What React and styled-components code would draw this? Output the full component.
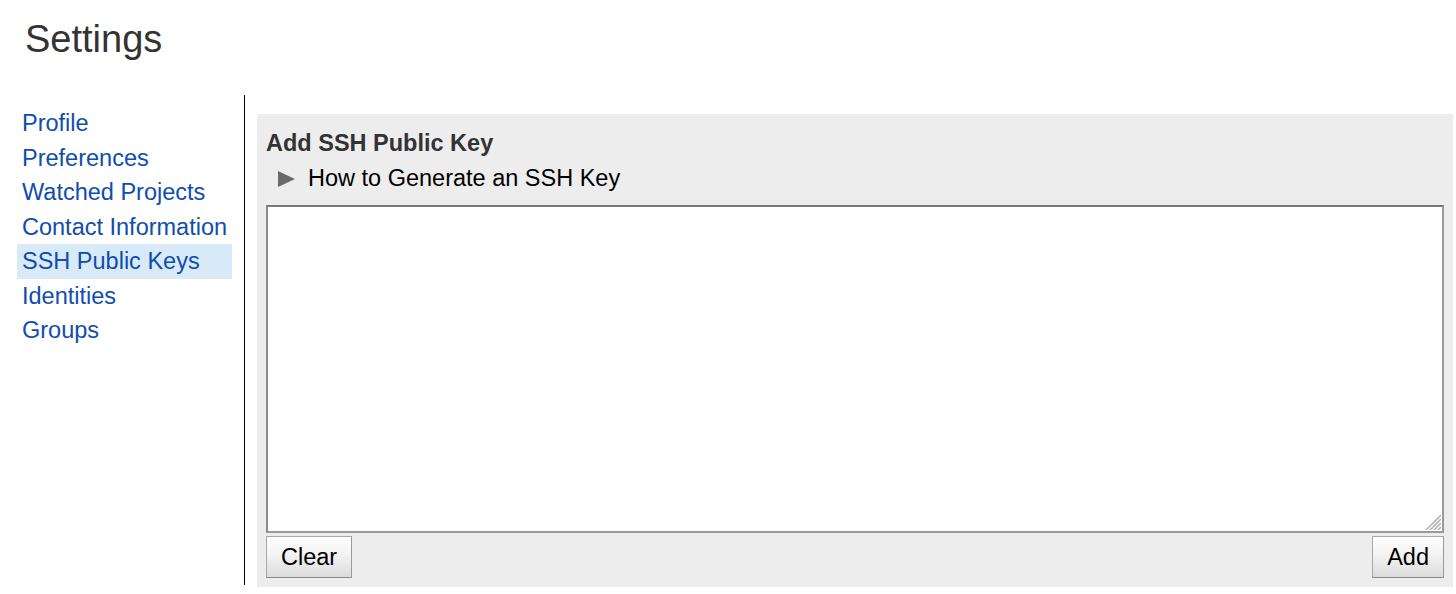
import React, { useState } from 'react';
import styled, { createGlobalStyle } from 'styled-components';

const GlobalStyle = createGlobalStyle`
  html, body {
    margin: 0;
    padding: 0;
    background: #ffffff;
  }
  body {
    font-family: "Liberation Sans", Arial, Helvetica, sans-serif;
    color: #000;
  }
`;

const NAV_ITEMS = [
  'Profile',
  'Preferences',
  'Watched Projects',
  'Contact Information',
  'SSH Public Keys',
  'Identities',
  'Groups'
];

//Styles
const Page = styled.div`
  width: 1456px;
`;

const Title = styled.h1`
  margin: 0;
  padding: 17px 0 0 25px;
  height: 95px;
  box-sizing: border-box;
  font-size: 38px;
  font-weight: normal;
  line-height: 44px;
  color: #333;
`;

const Body = styled.div`
  display: flex;
  align-items: flex-start;
`;

const Nav = styled.nav`
  box-sizing: border-box;
  width: 245px;
  height: 490px;
  padding: 11px 0 0 17px;
  border-right: 1px solid #000;
  display: flex;
  flex-direction: column;
`;

const NavLink = styled.a`
  display: block;
  width: 215px;
  height: 34.5px;
  box-sizing: border-box;
  padding-left: 5px;
  font-size: 23.5px;
  line-height: 34.5px;
  color: #0f4dae;
  text-decoration: none;
  white-space: nowrap;
  background: ${p => (p.$active ? '#d8eaf8' : 'transparent')};
  cursor: pointer;
`;

const Panel = styled.section`
  flex: 1;
  margin: 19px 3px 0 12px;
  padding: 16px 9px 9px;
  background: #ededed;
  display: flex;
  flex-direction: column;
`;

const Heading = styled.h2`
  margin: 0;
  font-size: 23.5px;
  font-weight: bold;
  line-height: 27px;
  color: #333;
`;

const Disclosure = styled.div`
  display: flex;
  align-items: center;
  gap: 12px;
  margin: 8px 0 0 11px;
  font-size: 23.5px;
  line-height: 27px;
  color: #000;
  cursor: pointer;
`;

const EditorWrap = styled.div`
  position: relative;
  margin-top: 13px;
  height: 328px;
`;

const KeyInput = styled.textarea`
  display: block;
  box-sizing: border-box;
  width: 100%;
  height: 100%;
  margin: 0;
  padding: 4px;
  border: 2px solid;
  border-color: #777 #999 #999 #8a8a8a;
  background: #fff;
  font-family: "Liberation Mono", monospace;
  font-size: 14px;
  resize: none;
  outline: none;
`;

const Grip = styled.svg`
  position: absolute;
  right: 3px;
  bottom: 3px;
  pointer-events: none;
`;

const Actions = styled.div`
  display: flex;
  justify-content: space-between;
  margin-top: 3px;
`;

const Button = styled.button`
  height: 42px;
  padding: 0 14px;
  border: 1px solid #a8a8a8;
  border-bottom-color: #888;
  border-right-color: #999;
  background: linear-gradient(#ffffff, #f4f4f4 40%, #dcdcdc);
  font-family: "Liberation Sans", Arial, Helvetica, sans-serif;
  font-size: 23.5px;
  color: #000;
  cursor: pointer;

  :active {
    background: linear-gradient(#dcdcdc, #f4f4f4);
  }
`;
//styles end

const Triangle = () => (
  <svg width="19" height="18" viewBox="0 0 19 18" style={{ flex: 'none' }}>
    <polygon points="1,1 18,9 1,17" fill="#6a6a6a" />
  </svg>
);

const App = () => {
  const [selected, setSelected] = useState('SSH Public Keys');
  const [key, setKey] = useState('');

  return (
    <Page>
      <GlobalStyle />
      <Title>Settings</Title>
      <Body>
        <Nav>
          {NAV_ITEMS.map(item => (
            <NavLink
              key={item}
              $active={item === selected}
              onClick={() => setSelected(item)}
            >
              {item}
            </NavLink>
          ))}
        </Nav>
        <Panel>
          <Heading>Add SSH Public Key</Heading>
          <Disclosure>
            <Triangle />
            How to Generate an SSH Key
          </Disclosure>
          <EditorWrap>
            <KeyInput
              value={key}
              onChange={event => setKey(event.target.value)}
            />
            <Grip width="16" height="16" viewBox="0 0 16 16">
              <g stroke="#b5b5b5" strokeWidth="1.6">
                <line x1="16" y1="1" x2="1" y2="16" />
                <line x1="16" y1="5" x2="5" y2="16" />
                <line x1="16" y1="9" x2="9" y2="16" />
                <line x1="16" y1="13" x2="13" y2="16" />
              </g>
            </Grip>
          </EditorWrap>
          <Actions>
            <Button onClick={() => setKey('')}>Clear</Button>
            <Button>Add</Button>
          </Actions>
        </Panel>
      </Body>
    </Page>
  );
};

export default App;
